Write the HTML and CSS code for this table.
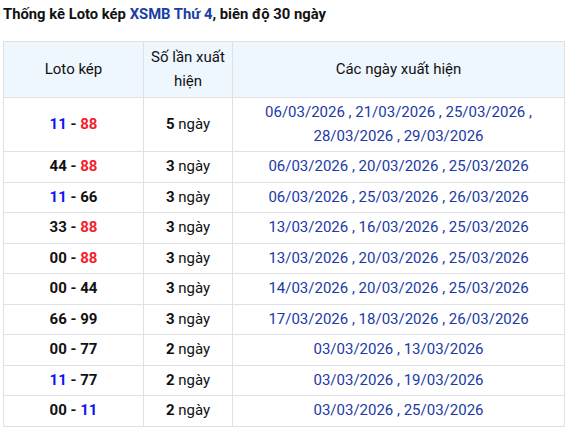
FILE: index.html
```html
<!DOCTYPE html>
<html lang="vi">
<head>
<meta charset="utf-8">
<link rel="stylesheet" href="styles.css">
</head>
<body>
<div class="wrap">
  <h2 class="title">Thống kê Loto kép <a class="link">XSMB Thứ 4</a>, biên độ 30 ngày</h2>
  <table class="tbl">
    <colgroup><col class="c1"><col class="c2"><col class="c3"></colgroup>
    <thead>
      <tr><th>Loto kép</th><th>Số lần xuất hiện</th><th>Các ngày xuất hiện</th></tr>
    </thead>
    <tbody>
      <tr><td class="pair"><span class="b">11</span> - <span class="r">88</span></td><td><b>5</b> ngày</td><td class="dates">06/03/2026 , 21/03/2026 , 25/03/2026 , 28/03/2026 , 29/03/2026</td></tr>
      <tr><td class="pair">44 - <span class="r">88</span></td><td><b>3</b> ngày</td><td class="dates">06/03/2026 , 20/03/2026 , 25/03/2026</td></tr>
      <tr><td class="pair"><span class="b">11</span> - 66</td><td><b>3</b> ngày</td><td class="dates">06/03/2026 , 25/03/2026 , 26/03/2026</td></tr>
      <tr><td class="pair">33 - <span class="r">88</span></td><td><b>3</b> ngày</td><td class="dates">13/03/2026 , 16/03/2026 , 25/03/2026</td></tr>
      <tr><td class="pair">00 - <span class="r">88</span></td><td><b>3</b> ngày</td><td class="dates">13/03/2026 , 20/03/2026 , 25/03/2026</td></tr>
      <tr><td class="pair">00 - 44</td><td><b>3</b> ngày</td><td class="dates">14/03/2026 , 20/03/2026 , 25/03/2026</td></tr>
      <tr><td class="pair">66 - 99</td><td><b>3</b> ngày</td><td class="dates">17/03/2026 , 18/03/2026 , 26/03/2026</td></tr>
      <tr><td class="pair">00 - 77</td><td><b>2</b> ngày</td><td class="dates">03/03/2026 , 13/03/2026</td></tr>
      <tr><td class="pair"><span class="b">11</span> - 77</td><td><b>2</b> ngày</td><td class="dates">03/03/2026 , 19/03/2026</td></tr>
      <tr><td class="pair">00 - <span class="b">11</span></td><td><b>2</b> ngày</td><td class="dates">03/03/2026 , 25/03/2026</td></tr>
    </tbody>
  </table>
</div>
</body>
</html>
```
FILE: styles.css
```css
html, body {
  margin: 0;
  padding: 0;
  background: #fff;
}
body {
  font-family: Roboto, "Liberation Sans", Arial, sans-serif;
  color: #111;
}
.wrap {
  padding: 0 3px;
}
.title {
  font-size: 14.8px;
  font-weight: 700;
  line-height: 20px;
  margin: 4px 0 17px;
  color: #111;
}
.link {
  color: #1a3ea6;
}
.tbl {
  width: 561px;
  border-collapse: collapse;
  table-layout: fixed;
  font-size: 15px;
}
.c1 { width: 140px; }
.c2 { width: 89px; }
.c3 { width: 332px; }
.tbl th, .tbl td {
  border: 1px solid #dfe1e5;
  padding: 3px 8px;
  line-height: 23.5px;
  text-align: center;
  vertical-align: middle;
}
.tbl th {
  background: #eef6fe;
  font-weight: 400;
  color: #111;
  padding: 4px 3px;
}
.pair {
  font-weight: 700;
  color: #111;
}
.b { color: #1212f2; }
.r { color: #f2202c; }
.dates {
  color: #1b3aa6;
}
```
